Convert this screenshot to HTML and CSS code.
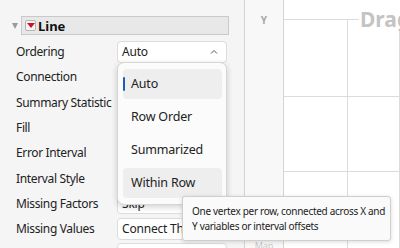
FILE: index.html
```html
<!DOCTYPE html>
<html>
<head>
	<title>Line</title>
	<link rel="stylesheet" href="styles.css">
</head>
<body>
	<div class="app">
		<div class="panel">
			<div class="outline">
				<span class="disclosure"></span>
				<div class="outline-head">
					<span class="menu-btn"><svg width="8" height="5" viewBox="0 0 8 5"><path d="M0 0H8L4 5Z" fill="#d0102a"/></svg></span>
					<b>Line</b>
				</div>
			</div>
			<div class="props">
				<div class="prop"><span class="prop-label">Ordering</span><div class="combo">Auto<svg class="chev" width="8" height="5" viewBox="0 0 8 5"><path d="M1 4.5L4 1.5L7 4.5" fill="none" stroke="#555" stroke-width="1"/></svg></div></div>
				<div class="prop"><span class="prop-label">Connection</span><div class="combo">Line</div></div>
				<div class="prop"><span class="prop-label">Summary Statistic</span><div class="combo">Mean</div></div>
				<div class="prop"><span class="prop-label">Fill</span><div class="combo">None</div></div>
				<div class="prop"><span class="prop-label">Error Interval</span><div class="combo">None</div></div>
				<div class="prop"><span class="prop-label">Interval Style</span><div class="combo">Bar</div></div>
				<div class="prop"><span class="prop-label">Missing Factors</span><div class="combo">Skip</div></div>
				<div class="prop"><span class="prop-label">Missing Values</span><div class="combo">Connect Through</div></div>
				<div class="prop"><span class="prop-label">Variables</span><div class="combo">Split</div></div>
			</div>
			<ul class="dropdown">
				<li class="item current">Auto</li>
				<li class="item">Row Order</li>
				<li class="item">Summarized</li>
				<li class="item hover">Within Row</li>
			</ul>
		</div>
		<div class="yzone">
			<span class="zone-y">Y</span>
			<span class="zone-map">Map</span>
		</div>
		<div class="graph">
			<div class="drag-row"><span class="drag">Drag variables here</span></div>
			<div class="cells">
				<div class="cell"></div><div class="cell"></div>
				<div class="cell"></div><div class="cell"></div>
				<div class="cell"></div><div class="cell"></div>
			</div>
		</div>
		<div class="tooltip">One vertex per row, connected across X and<br>Y variables or interval offsets</div>
	</div>
</body>
</html>
```

FILE: styles.css
```css
body {
	margin: 0;
	font-family: "Noto Sans", "Open Sans", sans-serif;
	color: #222;
}

.app {
	display: flex;
	height: 248px;
	overflow: hidden;
	position: relative;
	background: #fff;
}

.panel {
	width: 244px;
	flex: none;
	background: #f5f5f5;
	border-right: 1px solid #d4d4d4;
	position: relative;
}

.outline {
	display: flex;
	align-items: center;
	padding: 16px 0 0 12px;
}

.disclosure {
	width: 0;
	height: 0;
	border-left: 3.5px solid transparent;
	border-right: 3.5px solid transparent;
	border-top: 6px solid #9a9a9a;
	margin-right: 3px;
}

.outline-head {
	display: flex;
	align-items: center;
	width: 203px;
	height: 17px;
	background: #e8e8e8;
	border: 1px solid #c9c9c9;
	padding-left: 3px;
}

.menu-btn {
	display: flex;
	align-items: center;
	justify-content: center;
	width: 9px;
	height: 9px;
	background: #f4f4f4;
	border: 1px solid #b4b4b4;
	border-radius: 2px;
	margin-right: 2px;
}

.outline-head b {
	font-size: 13px;
	color: #111;
}

.props {
	padding: 4px 0 0 16px;
}

.prop {
	display: flex;
	align-items: center;
	height: 25.3px;
}

.prop-label {
	width: 101px;
	font-size: 12px;
	letter-spacing: -0.35px;
	white-space: nowrap;
}

.combo {
	display: flex;
	align-items: center;
	justify-content: space-between;
	width: 104px;
	height: 20px;
	padding-left: 4px;
	background: #fff;
	border: 1px solid #dcdcdc;
	border-radius: 4px;
	font-size: 12px;
	letter-spacing: -0.2px;
	white-space: nowrap;
	overflow: hidden;
}

.chev {
	margin-right: 8px;
}

.dropdown {
	list-style: none;
	margin: 0;
	position: absolute;
	left: 117px;
	top: 62px;
	width: 99px;
	padding: 6px 4px 3px 5px;
	background: #fbfbfb;
	border: 1px solid #d6d6d6;
	border-radius: 7px;
	box-shadow: 0 2px 6px rgba(0, 0, 0, 0.18);
}

.item {
	height: 30px;
	line-height: 30px;
	margin-bottom: 3px;
	padding-left: 8px;
	font-size: 12.5px;
	letter-spacing: -0.2px;
	border-radius: 4px;
	position: relative;
}

.current,
.hover {
	background: #eeeeee;
}

.current:before {
	content: "";
	position: absolute;
	left: 0;
	top: 8px;
	width: 2px;
	height: 14px;
	background: #1a5fb4;
	border-radius: 1px;
}

.yzone {
	width: 38px;
	flex: none;
	background: #f8f8f8;
	border-right: 1px solid #d4d4d4;
	display: flex;
	flex-direction: column;
	justify-content: space-between;
	align-items: center;
}

.zone-y {
	margin-top: 13px;
	font-size: 10px;
	font-weight: bold;
	color: #a8a8a8;
}

.zone-map {
	font-size: 9px;
	color: #c8c8c8;
	margin-bottom: -4px;
}

.graph {
	flex: 1;
	padding-top: 19px;
	white-space: nowrap;
}

.drag-row {
	height: 0;
	border-top: 1px solid #dcdcdc;
	position: relative;
}

.drag {
	position: absolute;
	left: 75px;
	top: -14px;
	padding-left: 1px;
	background: #fff;
	font-size: 21px;
	font-weight: bold;
	color: #c4c4c4;
	line-height: 26px;
}

.cells {
	display: grid;
	grid-template-columns: 64px 1fr;
	grid-template-rows: 77px 75px 80px;
}

.cell {
	border-right: 1px solid #dcdcdc;
	border-bottom: 1px solid #dcdcdc;
}

.tooltip {
	position: absolute;
	left: 182px;
	top: 196px;
	width: 190px;
	height: 30px;
	padding: 7px 8px 6px 9px;
	background: #fafafa;
	border: 1px solid #cfcfcf;
	border-radius: 3px;
	box-shadow: 0 1px 4px rgba(0, 0, 0, 0.15);
	font-size: 10px;
	letter-spacing: -0.3px;
	line-height: 15px;
	white-space: nowrap;
	color: #222;
}
```
